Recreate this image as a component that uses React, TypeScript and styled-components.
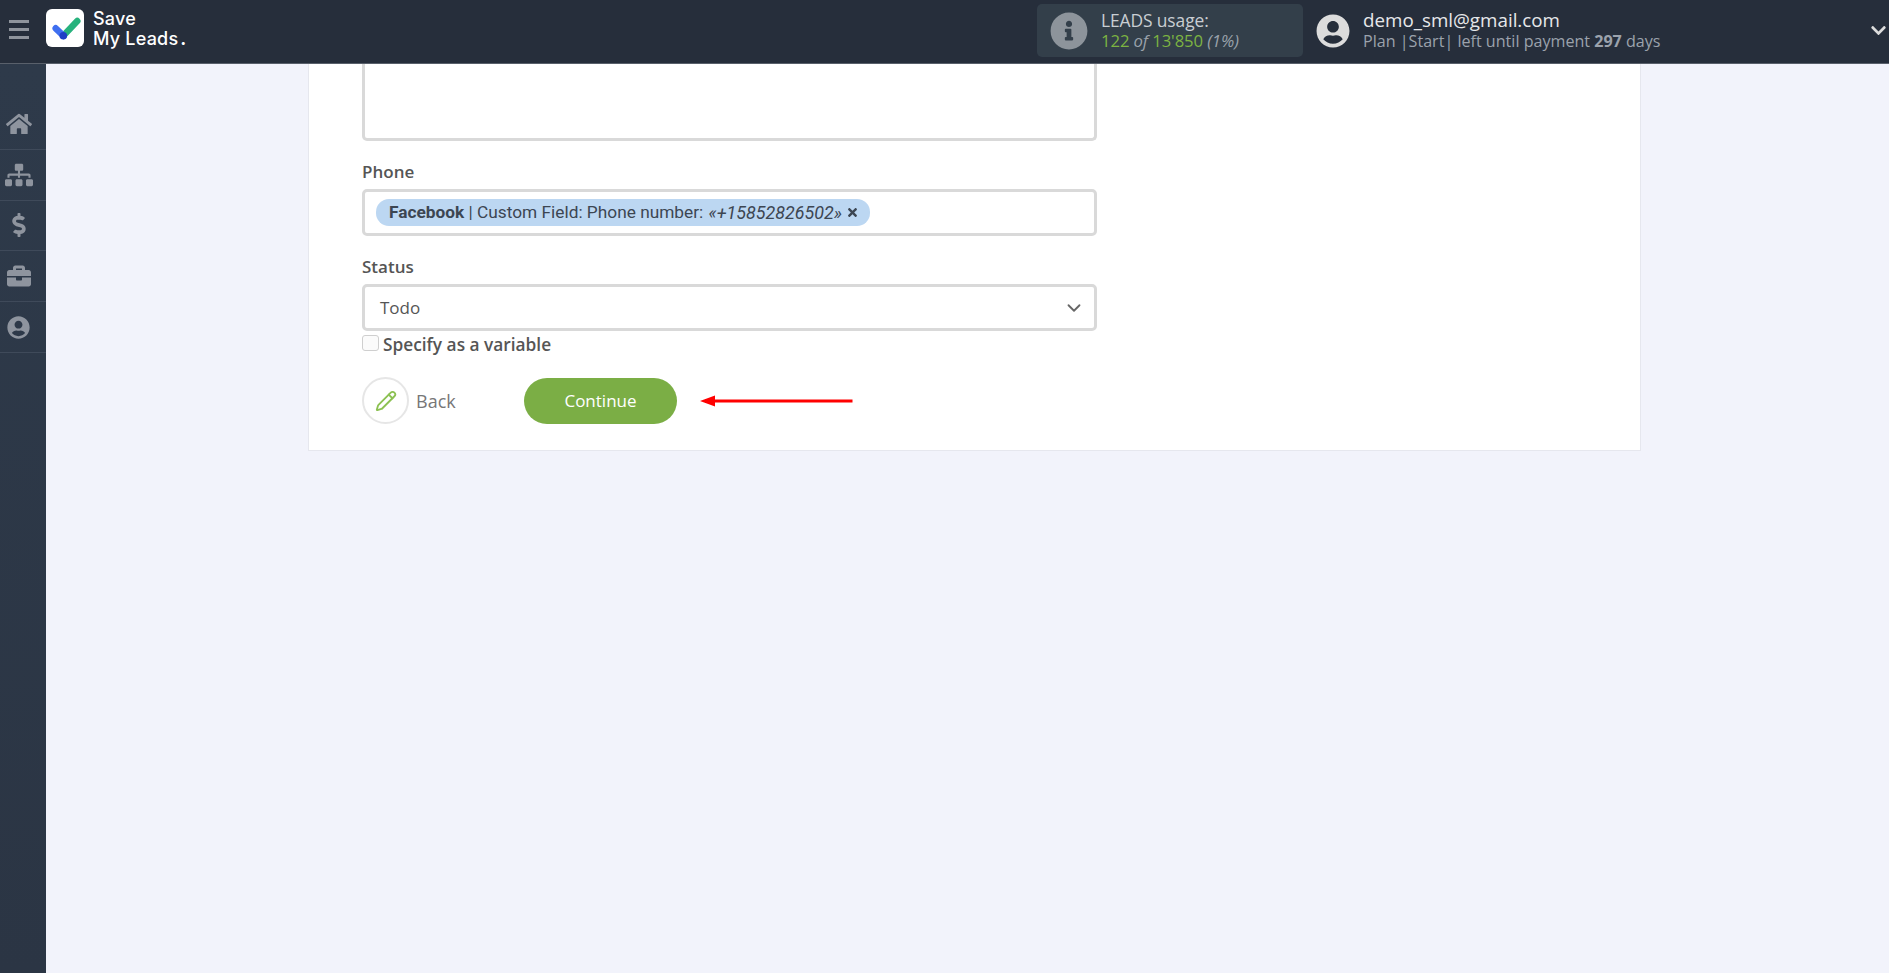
import {FC} from 'react'
import styled, {createGlobalStyle} from 'styled-components'
import {FaBriefcase, FaChevronDown, FaDollarSign, FaHome, FaInfoCircle, FaSitemap, FaTimes, FaUserCircle} from 'react-icons/fa'
import {ChevronDown, Pencil} from 'lucide-react'

const GlobalStyle = createGlobalStyle`
  html, body {
    margin: 0;
    padding: 0;
    height: 100%;
    overflow: hidden;
    background: #f2f3fb;
    font-family: "Open Sans", "Liberation Sans", sans-serif;
  }

  * {
    box-sizing: border-box;
  }
`

const App: FC = () => {
   return (
      <Page>
         <GlobalStyle/>
         <Header>
            <Burger><i/><i/><i/></Burger>
            <Logo viewBox="0 0 38 38">
               <rect width="38" height="38" rx="6" fill="#fff"/>
               <path d="M17.3 26.7L31.3 12" stroke="#27b27d" strokeWidth="6.5" strokeLinecap="round"/>
               <path d="M9.7 19.3L17.3 26.7" stroke="#3f6ff0" strokeWidth="6.5" strokeLinecap="round"/>
               <circle cx="17.3" cy="26.7" r="3.8" fill="#1f3fc4"/>
            </Logo>
            <LogoText>Save<br/>My Leads<Dot>.</Dot></LogoText>
            <LeadsBox>
               <FaInfoCircle size={38} color="#8d949b"/>
               <div>
                  <LeadsTitle>LEADS usage:</LeadsTitle>
                  <LeadsCount>122 <em>of</em> 13'850 <em>(1%)</em></LeadsCount>
               </div>
            </LeadsBox>
            <UserBlock>
               <FaUserCircle size={34} color="#dcdcdc"/>
               <UserText>
                  <Email>demo_sml@gmail.com</Email>
                  <PlanLine>Plan |Start| left until payment <b>297</b> days</PlanLine>
               </UserText>
               <UserChevron><FaChevronDown size={17}/></UserChevron>
            </UserBlock>
         </Header>
         <Body>
            <Sidebar>
               <SideItem><FaHome size={26}/></SideItem>
               <SideItem><FaSitemap size={28}/></SideItem>
               <SideItem><FaDollarSign size={24}/></SideItem>
               <SideItem><FaBriefcase size={24}/></SideItem>
               <SideItem><FaUserCircle size={23}/></SideItem>
            </Sidebar>
            <Main>
               <Card>
                  <TextArea/>
                  <FieldLabel>Phone</FieldLabel>
                  <PhoneInput>
                     <Chip>
                        <b>Facebook</b>&nbsp;| Custom Field: Phone number:&nbsp;<em>«+15852826502»</em>
                        <FaTimes size={13}/>
                     </Chip>
                  </PhoneInput>
                  <FieldLabel>Status</FieldLabel>
                  <SelectBox>
                     Todo
                     <ChevronDown size={22} strokeWidth={2} color="#666"/>
                  </SelectBox>
                  <CheckRow>
                     <CheckBox/>
                     Specify as a variable
                  </CheckRow>
                  <Buttons>
                     <BackCircle><Pencil size={22} strokeWidth={2} color="#8cc152"/></BackCircle>
                     <BackText>Back</BackText>
                     <ContinueButton>Continue</ContinueButton>
                     <Arrow viewBox="0 0 153 12">
                        <path d="M0 6L15 0.5V4.6H152.5V7.4H15V11.5Z" fill="#f00"/>
                     </Arrow>
                  </Buttons>
               </Card>
            </Main>
         </Body>
      </Page>
   )
}

export default App

const Page = styled.div`
  width: 1889px;
  height: 973px;
  display: flex;
  flex-direction: column;
  overflow: hidden;
`

const Header = styled.header`
  height: 64px;
  flex-shrink: 0;
  display: flex;
  align-items: center;
  background: #262e3b;
  border-bottom: 1px solid #59606b;
`

const Burger = styled.div`
  width: 20px;
  margin: 0 0 4px 9px;
  display: flex;
  flex-direction: column;
  gap: 5px;

  i {
    display: block;
    height: 3px;
    background: #8f949c;
  }
`

const Logo = styled.svg`
  width: 38px;
  height: 38px;
  margin: 0 0 7px 17px;
  flex-shrink: 0;
`

const LogoText = styled.div`
  margin: 0 0 6px 9px;
  width: 200px;
  font-family: Inter, sans-serif;
  font-weight: 500;
  font-size: 18px;
  line-height: 20px;
  letter-spacing: 0.2px;
  color: #fff;
`

const Dot = styled.span`
  margin-left: 2px;
  font-weight: 700;
`

const LeadsBox = styled.div`
  width: 266px;
  height: 53px;
  margin: 0 0 2px 744px;
  padding-left: 13px;
  display: flex;
  align-items: center;
  gap: 13px;
  border-radius: 5px;
  background: #333f4a;
`

const LeadsTitle = styled.div`
  font-size: 17.4px;
  line-height: 21px;
  letter-spacing: -0.1px;
  color: #c9ced3;
`

const LeadsCount = styled.div`
  font-size: 16.7px;
  line-height: 20px;
  letter-spacing: -0.1px;
  color: #7cb342;

  em {
    color: #9aa2ab;
  }
`

const UserBlock = styled.div`
  flex: 1;
  margin: 0 0 2px 13px;
  display: flex;
  align-items: center;
  gap: 13px;
`

const UserText = styled.div`
  flex: 1;
`

const Email = styled.div`
  font-size: 18.8px;
  line-height: 22px;
  color: #e6e8ea;
`

const PlanLine = styled.div`
  font-size: 16.1px;
  line-height: 21px;
  color: #9ba2ac;

  b {
    font-weight: 700;
  }
`

const UserChevron = styled.div`
  display: flex;
  margin-right: 2px;
  color: #dcdcdc;
`

const Body = styled.div`
  flex: 1;
  display: flex;
  min-height: 0;
`

const Sidebar = styled.nav`
  width: 46px;
  flex-shrink: 0;
  padding-top: 35px;
  background: linear-gradient(180deg, #2e3a4a, #2b3544);
`

const SideItem = styled.div`
  height: 50.8px;
  padding-right: 9px;
  display: flex;
  align-items: center;
  justify-content: center;
  color: #8e949e;
  border-bottom: 1px solid #3f4a5a;
`

const Main = styled.main`
  flex: 1;
  background: #f2f3fb;
`

const Card = styled.section`
  width: 1333px;
  height: 387px;
  margin-left: 262px;
  padding: 0 543px 0 53px;
  background: #fff;
  border: 1px solid #e6e7ee;
  border-top: none;
`

const TextArea = styled.div`
  height: 77px;
  border: 3px solid #d9d9d9;
  border-top: none;
  border-radius: 0 0 5px 5px;
`

const FieldLabel = styled.div`
  margin-top: 19px;
  margin-bottom: 6px;
  font-size: 17px;
  line-height: 23px;
  font-weight: 600;
  color: #555;
`

const PhoneInput = styled.div`
  height: 47px;
  padding: 0 0 1px 11px;
  display: flex;
  align-items: center;
  border: 3px solid #d9d9d9;
  border-radius: 5px;
`

const Chip = styled.div`
  height: 27px;
  padding: 0 11px 0 13px;
  display: flex;
  align-items: center;
  border-radius: 13px;
  background: #bcd7f2;
  font-family: Roboto, sans-serif;
  font-size: 17.3px;
  color: #3c4652;
  white-space: pre;

  b {
    font-weight: 700;
  }

  em {
    margin-left: 1px;
    font-size: 17.9px;
    font-style: italic;
  }

  svg {
    margin-left: 4px;
  }
`

const SelectBox = styled.div`
  height: 47px;
  padding: 0 9px 0 15px;
  display: flex;
  align-items: center;
  justify-content: space-between;
  border: 3px solid #d9d9d9;
  border-radius: 5px;
  font-size: 17px;
  color: #555;
`

const CheckRow = styled.div`
  margin-top: 2px;
  display: flex;
  align-items: center;
  gap: 4px;
  font-size: 17.3px;
  line-height: 23px;
  font-weight: 600;
  color: #555;
`

const CheckBox = styled.span`
  width: 17px;
  height: 16px;
  margin-bottom: 4px;
  border: 1px solid #cfcfcf;
  border-radius: 3px;
  background: #fbfbfb;
`

const Buttons = styled.div`
  margin-top: 21px;
  display: flex;
  align-items: center;
`

const BackCircle = styled.div`
  width: 47px;
  height: 47px;
  display: flex;
  align-items: center;
  justify-content: center;
  border: 2px solid #e6e6e6;
  border-radius: 50%;
`

const BackText = styled.span`
  width: 108px;
  margin-left: 7px;
  font-size: 18px;
  color: #777;
`

const ContinueButton = styled.div`
  width: 153px;
  height: 46px;
  display: flex;
  align-items: center;
  justify-content: center;
  border-radius: 23px;
  background: #7bae45;
  font-size: 17px;
  color: #fff;
`

const Arrow = styled.svg`
  width: 153px;
  height: 12px;
  margin-left: 23px;
`
